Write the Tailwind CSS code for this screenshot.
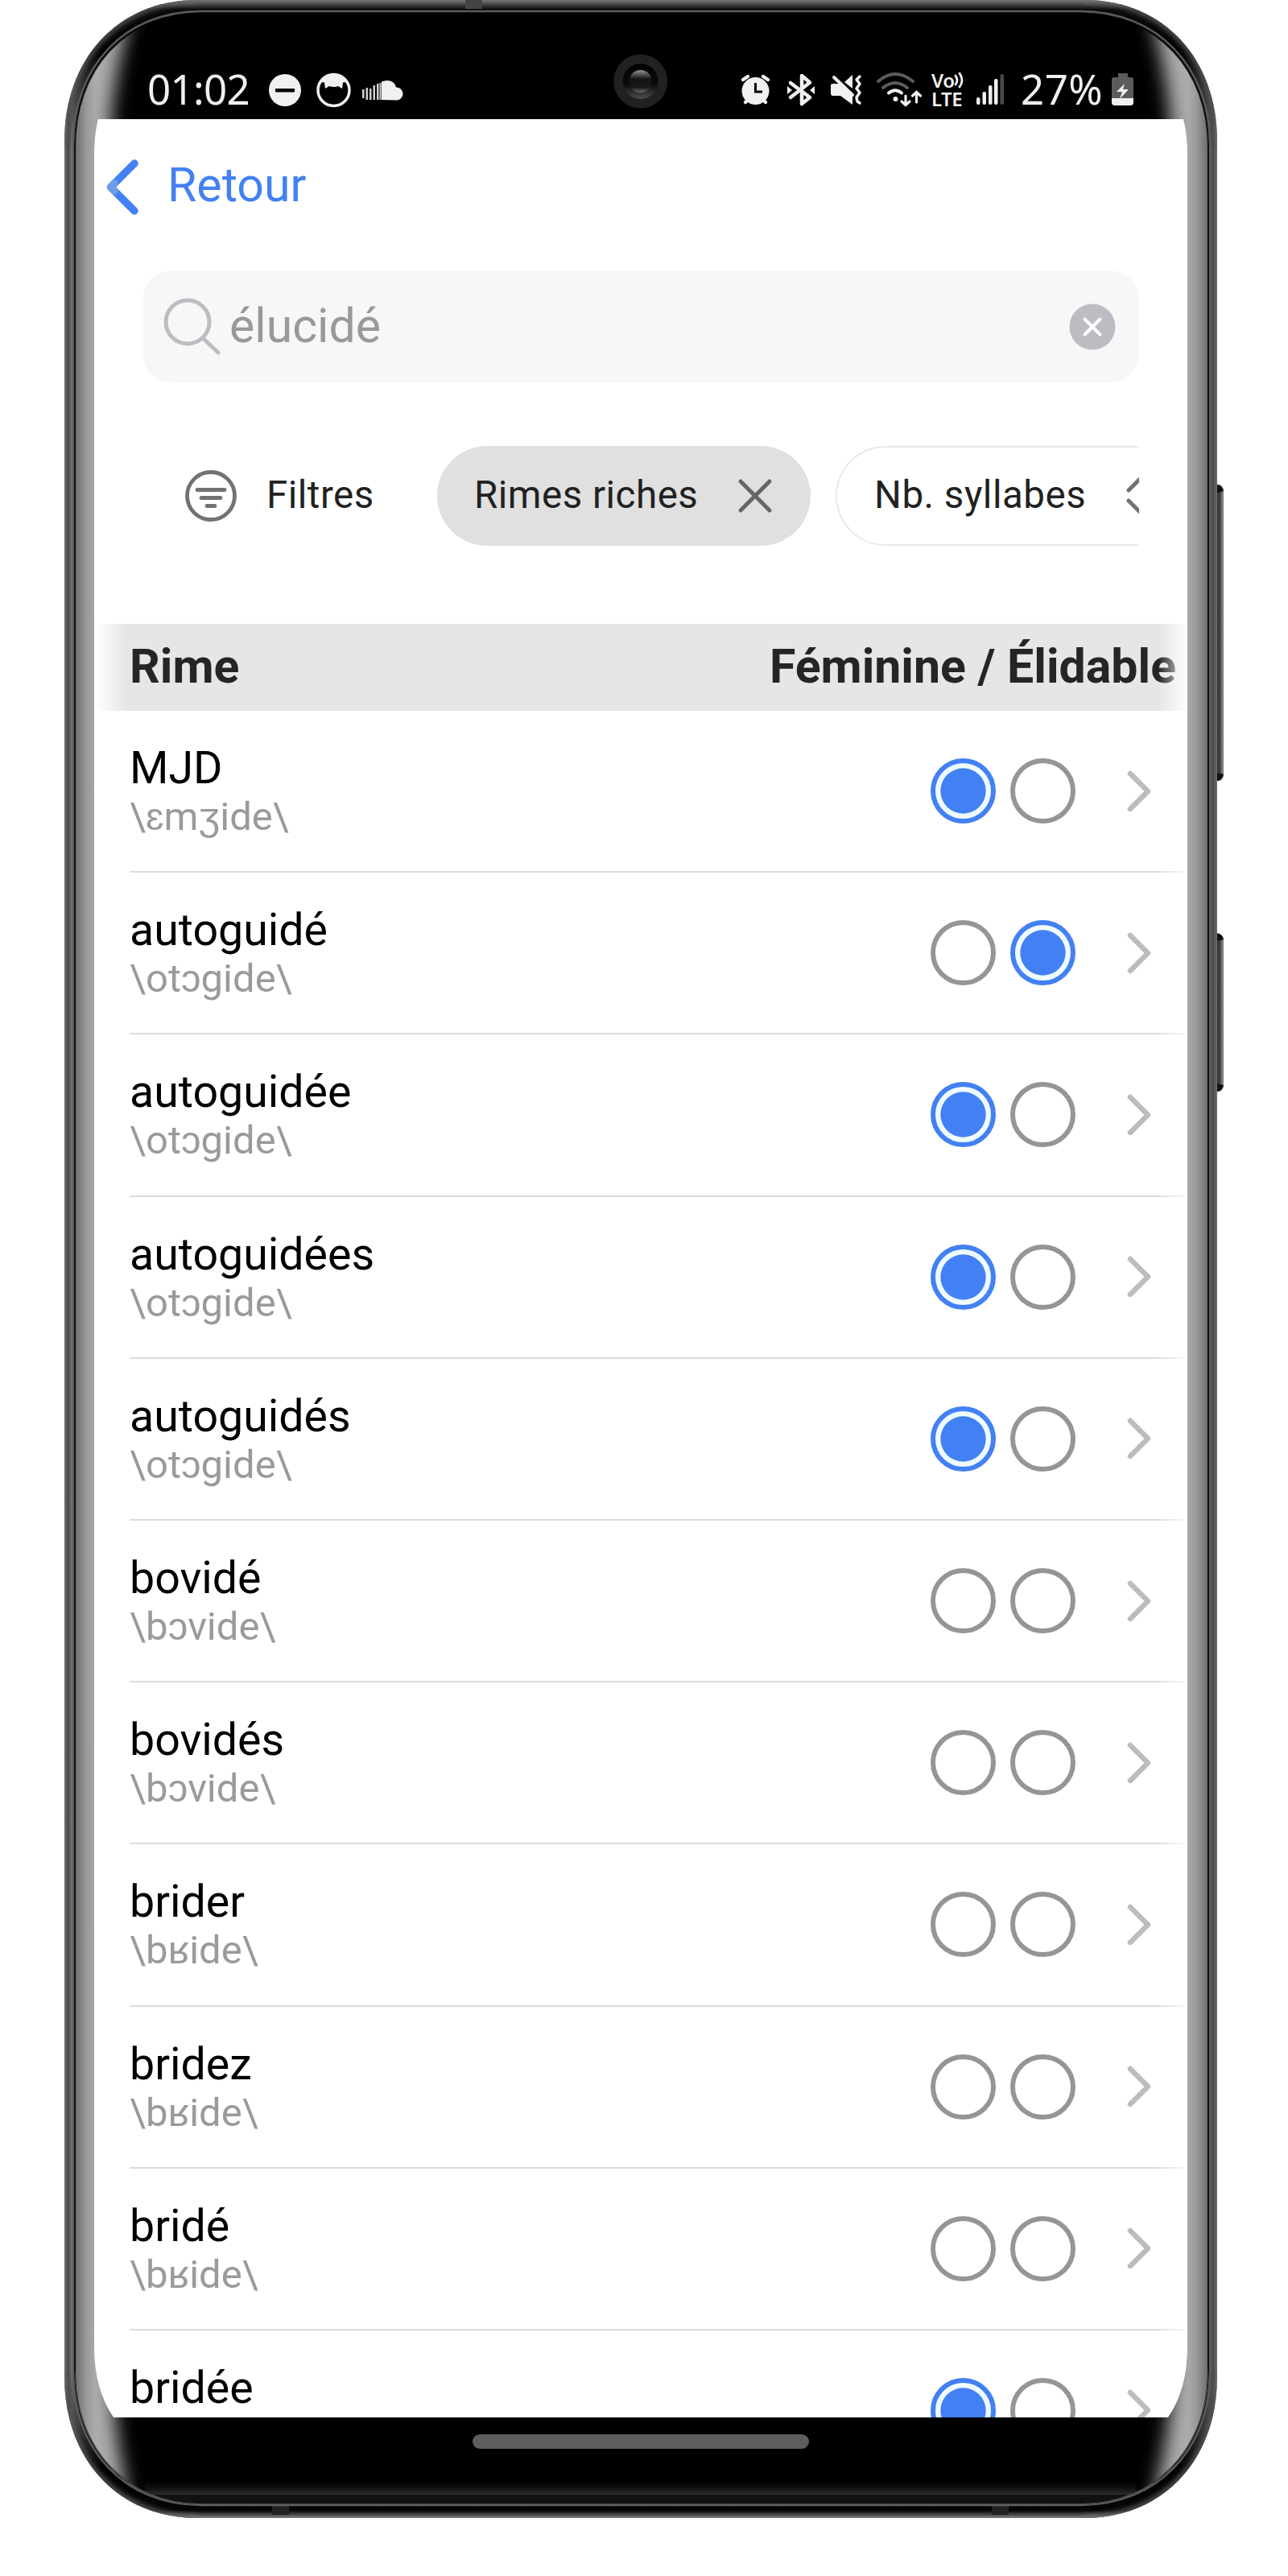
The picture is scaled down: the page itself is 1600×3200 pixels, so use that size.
<!DOCTYPE html>
<html lang="fr">
<head>
<meta charset="utf-8">
<title>Rimes</title>
<script src="https://cdn.jsdelivr.net/npm/@tailwindcss/browser@4"></script>
</head>
<body class="bg-white font-['Roboto',sans-serif]">
<div class="relative w-[1600px] h-[3200px] overflow-hidden bg-white">

<!-- Device body -->
<svg class="absolute inset-0" width="1600" height="3200" viewBox="0 0 1600 3200">
  <defs>
    <linearGradient id="side" x1="80" x2="1512" y1="0" y2="0" gradientUnits="userSpaceOnUse">
      <stop offset="0" stop-color="#6e6e6e"/><stop offset=".0035" stop-color="#4a4a4a"/><stop offset=".0065" stop-color="#777"/>
      <stop offset=".9935" stop-color="#666"/><stop offset=".9965" stop-color="#4a4a4a"/><stop offset="1" stop-color="#707070"/>
    </linearGradient>
    <linearGradient id="ends" x1="0" x2="0" y1="0" y2="3128" gradientUnits="userSpaceOnUse">
      <stop offset="0" stop-color="#777"/><stop offset=".0038" stop-color="#0a0a0a"/><stop offset=".02" stop-color="#000"/><stop offset=".035" stop-color="#000" stop-opacity=".55"/>
      <stop offset=".06" stop-color="#000" stop-opacity="0"/><stop offset=".94" stop-color="#000" stop-opacity="0"/><stop offset=".965" stop-color="#000" stop-opacity=".55"/><stop offset=".98" stop-color="#000"/>
      <stop offset=".997" stop-color="#050505"/><stop offset="1" stop-color="#808080"/>
    </linearGradient>
    <linearGradient id="glass" x1="93" x2="1501" y1="0" y2="0" gradientUnits="userSpaceOnUse">
      <stop offset="0" stop-color="#6a6b6b"/><stop offset=".010" stop-color="#979898"/><stop offset=".018" stop-color="#acacac"/>
      <stop offset=".982" stop-color="#acacac"/><stop offset=".990" stop-color="#979898"/><stop offset="1" stop-color="#6a6b6b"/>
    </linearGradient>
    <linearGradient id="lip" x1="0" x2="0" y1="3079" y2="3099" gradientUnits="userSpaceOnUse">
      <stop offset="0" stop-color="#000" stop-opacity="0"/><stop offset="1" stop-color="#303030"/>
    </linearGradient>
    <linearGradient id="btn" x1="1512" x2="1520" y1="0" y2="0" gradientUnits="userSpaceOnUse">
      <stop offset="0" stop-color="#333"/><stop offset=".6" stop-color="#4c4c4c"/><stop offset=".75" stop-color="#8a8a8a"/><stop offset="1" stop-color="#777"/>
    </linearGradient>
    <linearGradient id="lens" x1="0" x2="0" y1="86" y2="116" gradientUnits="userSpaceOnUse">
      <stop offset="0" stop-color="#9a9da3"/><stop offset=".4" stop-color="#151515"/><stop offset=".75" stop-color="#181818"/><stop offset="1" stop-color="#777"/>
    </linearGradient>
    <linearGradient id="lensring" x1="0" x2="0" y1="79" y2="123" gradientUnits="userSpaceOnUse">
      <stop offset="0" stop-color="#000"/><stop offset=".6" stop-color="#0c0c0c"/><stop offset="1" stop-color="#505050"/>
    </linearGradient>
    <filter id="soft" x="-5%" y="-5%" width="110%" height="110%"><feGaussianBlur stdDeviation="11"/></filter>
    <filter id="softer" x="-5%" y="-5%" width="110%" height="110%"><feGaussianBlur stdDeviation="3.5"/></filter>
    <clipPath id="body"><path d="M80 175C80 75 145 0 245 0H1347C1447 0 1512 75 1512 175V2953C1512 3053 1447 3128 1347 3128H245C145 3128 80 3053 80 2953Z"/></clipPath>
    <clipPath id="inner"><path d="M93 182C93 87 155 16 250 16H1342C1437 16 1501 87 1501 182V2947C1501 3039 1437 3111 1342 3111H250C155 3111 93 3039 93 2947Z"/></clipPath>
  </defs>
  <rect x="1505" y="602" width="15" height="368" rx="7" fill="url(#btn)"/>
  <path d="M1512 602Q1518 603 1520 610L1512 612ZM1512 970Q1518 969 1520 962L1512 960Z" fill="#111"/>
  <rect x="1505" y="1160" width="15" height="196" rx="7" fill="url(#btn)"/>
  <path d="M1512 1159Q1518 1160 1520 1167L1512 1169ZM1512 1356Q1518 1355 1520 1348L1512 1346Z" fill="#111"/>
  <g clip-path="url(#body)">
    <rect x="80" y="0" width="1432" height="3128" fill="url(#side)"/>
    <rect x="80" y="0" width="1432" height="3128" fill="url(#ends)"/>
    <path d="M80 175C80 75 145 0 245 0M1347 0C1447 0 1512 75 1512 175M80 2953C80 3053 145 3128 245 3128M1347 3128C1447 3128 1512 3053 1512 2953" fill="none" stroke="#6a6a6a" stroke-width="6" filter="url(#softer)"/>
    <rect x="338" y="3113" width="21" height="11" fill="#222"/><rect x="1232" y="3113" width="21" height="11" fill="#222"/>
    <rect x="578" y="0" width="21" height="11" fill="#444"/>
  </g>
  <path d="M91 180C91 84 153 14 250 14H1342C1439 14 1503 84 1503 180V2948C1503 3041 1439 3112 1342 3112H250C153 3112 91 3041 91 2948Z" fill="#000" stroke="#5c5c5c" stroke-width="2.5"/>
  <g clip-path="url(#inner)">
    <rect x="92" y="16" width="1410" height="3096" fill="url(#glass)"/>
    <path d="M136 200C136 120 150 60 176 -30H1416C1442 60 1456 120 1456 200V2960C1452 3040 1436 3070 1426 3160H166C156 3070 144 3040 140 2960Z" fill="#000" filter="url(#soft)"/>
    <rect x="180" y="3079" width="1232" height="20" fill="url(#lip)"/>
    <path d="M165 3099H1427V3112H165Z" fill="#111"/>
    <path d="M93 182C93 87 155 16 250 16H1342C1437 16 1501 87 1501 182V2947C1501 3039 1437 3111 1342 3111H250C155 3111 93 3039 93 2947Z" fill="none" stroke="#000" stroke-width="2"/>
    <path d="M92 2945C92 3039 155 3111.500 250 3111.500H1342C1437 3111.500 1502 3039 1502 2945" fill="none" stroke="#666" stroke-width="2.500"/>
  </g>
  <path d="M122 148H1470C1473.500 162 1475 176 1475 195V2915C1475 2950 1467 2980 1451 3003H141C125 2980 117 2950 117 2915V195C117 176 118.500 162 122 148Z" fill="#fff"/>
  <circle cx="795.700" cy="101" r="33.500" fill="#212121"/>
  <circle cx="795.700" cy="101" r="22" fill="url(#lensring)"/>
  <circle cx="795.700" cy="101" r="14" fill="url(#lens)"/>
</svg>

<!-- Screen -->
<div class="relative ml-[117px] w-[1358px] h-[3003px] overflow-hidden flex flex-col">

  <!-- Status bar -->
  <div class="h-[148px] shrink-0 flex items-start justify-between pl-[66px] pr-[66px] text-[#f0f0f0] font-['Noto_Sans']">
    <div class="flex pt-[76px] h-[148px]">
      <span class="w-[150px] -mt-0.5 text-[51px] leading-[72px] tracking-[-0.700px]">01:02</span>
      <svg class="mt-2" width="172" height="56" viewBox="333 84 172 56">
        <circle cx="354" cy="112" r="20" fill="#f0f0f0"/><rect x="342" y="110" width="24" height="4.500" rx="1" fill="#000"/>
        <circle cx="414.500" cy="112" r="19.500" fill="none" stroke="#f0f0f0" stroke-width="3.500"/>
        <path d="M396 106A19.500 19.500 0 0 1 433 106L430 103Q427 101 426 103L425 110L420 107Q414.500 109 409 107L404 110L403 103Q402 101 399 103Z" fill="#f0f0f0"/>
        <path d="M474 124V101.500Q477 100 481 100Q490 100 492 108.500A8 8 0 1 1 493 124.500Z" fill="#f0f0f0"/>
        <g fill="#d0d0d0"><rect x="450" y="111" width="2.500" height="11"/><rect x="454.500" y="109" width="2.500" height="15"/><rect x="459" y="110" width="2.500" height="14"/><rect x="463.500" y="106" width="2.500" height="18"/><rect x="468" y="104" width="2.500" height="20"/><rect x="471.500" y="103" width="2" height="21"/></g>
      </svg>
    </div>
    <div class="flex pt-[76px] h-[148px]">
      <svg class="mt-2" width="240" height="56" viewBox="913 84 240 56" fill="#f0f0f0">
        <circle cx="939.500" cy="113" r="17"/><path d="M924 99L930 95M955 99L949 95M927 127L930 124M952 127L949 124" stroke="#f0f0f0" stroke-width="4.500" stroke-linecap="round"/><path d="M939.500 103V114H948" stroke="#000" stroke-width="3" fill="none"/>
        <path d="M983 103L1007 121L997 129V94L1007 102.500L983 121" fill="none" stroke="#f0f0f0" stroke-width="4.500" stroke-linejoin="round" stroke-linecap="round"/><path d="M979 107L985 112L979 117ZM1013 107L1007 112L1013 117Z"/>
        <path d="M1033 106Q1033 104 1036 104H1043L1060 119V130L1045 119H1036Q1033 119 1033 116ZM1060 93V110L1050 102Z"/><path d="M1037 96L1060 118" stroke="#f0f0f0" stroke-width="4" stroke-linecap="round"/><path d="M1069 95L1065 99L1069 104L1065 110L1069 115L1065 121L1066 126L1069 128" fill="none" stroke="#f0f0f0" stroke-width="3.500" stroke-linejoin="round" stroke-linecap="round"/>
        <g fill="none" stroke-linecap="round" stroke-width="4"><path d="M1092 101Q1113 83 1135 101" stroke="#5c5c5c"/><path d="M1098 109Q1113 97 1128 109" stroke="#5c5c5c"/><path d="M1105 115.500Q1113 109 1121 115.500" stroke="#f0f0f0"/><path d="M1126 119V130M1121 126L1126 130.500L1131 126M1139.500 127V115M1134.500 119L1139.500 114.500L1144.500 119" stroke="#f0f0f0" stroke-width="3.200"/></g><circle cx="1113.500" cy="123" r="3"/>
      </svg>
      <div class="mt-[12px] w-[52px] pl-[5px] flex flex-col font-semibold text-[24px] leading-[23px] tracking-[-0.500px]">
        <span class="flex items-center h-[23px]">Vo<svg class="shrink-0" width="14" height="20" viewBox="0 0 14 20"><path d="M2 4Q6 10 2 15M7 1Q13 10 7 18" fill="none" stroke="#f0f0f0" stroke-width="2.800" stroke-linecap="round"/></svg></span>
        <span class="h-[23px]">LTE</span>
      </div>
      <svg class="mt-2" width="62" height="56" viewBox="1205 84 62 56" fill="#f0f0f0">
        <rect x="1214" y="121" width="4.500" height="9" rx="2"/><rect x="1221.500" y="114" width="4.500" height="16" rx="2"/><rect x="1229" y="106" width="4.500" height="24" rx="2"/><rect x="1236" y="98" width="4.500" height="32" rx="2"/><rect x="1243.500" y="92" width="4.500" height="38" rx="2" fill="#4a4a4a"/>
      </svg>
      <span class="w-[111px] pl-0.5 -mt-0.5 text-[51px] leading-[72px] tracking-[0.500px]">27%</span>
      <svg class="mt-2" width="32" height="56" viewBox="1377 84 32 56">
        <path d="M1389 91H1401V96H1405Q1408 96 1408 99V127Q1408 131 1404 131H1385Q1381 131 1381 127V99Q1381 96 1384 96H1389Z" fill="#5c5c5c"/><path d="M1381 122H1408V127Q1408 131 1404 131H1385Q1381 131 1381 127Z" fill="#f0f0f0"/><path d="M1397 104L1387 114H1394L1391 123L1402 111H1395Z" fill="#f0f0f0"/>
      </svg>
    </div>
  </div>

  <!-- Navigation -->
  <div class="h-[188px] shrink-0 flex pl-[10px] pt-[42px] text-[#4380f4]">
    <svg width="81" height="84" viewBox="127 190 81 84" fill="none" stroke-linecap="round" stroke-linejoin="round" stroke-width="9.500"><path d="M167 203L137.500 232.500L167 262" stroke="#4380f4"/><path d="M142 228L137.500 232.500L142 237" stroke="#709bea"/></svg>
    <span class="text-[59px] leading-[80px]">Retour</span>
  </div>

  <!-- Search -->
  <div class="mx-[60px] h-[139px] shrink-0 rounded-[36px] bg-[#f7f7f7] flex items-center pl-[20px] pr-[26px]">
    <svg width="88" height="80" viewBox="197 366 88 80" fill="none" stroke="#bbbdc2" stroke-width="5" stroke-linecap="round"><circle cx="233" cy="400" r="27"/><path d="M252 420L271 438"/></svg>
    <span class="flex-1 -mt-0.5 text-[59px] leading-[80px] text-[#999]">élucidé</span>
    <svg width="64" height="64" viewBox="1325 374 64 64"><circle cx="1357" cy="406" r="28.500" fill="#bbbdc2"/><path d="M1347.500 396.500L1366.500 415.500M1366.500 396.500L1347.500 415.500" stroke="#fff" stroke-width="4" stroke-linecap="round"/></svg>
  </div>

  <!-- Filters -->
  <div class="mx-[60px] mt-[79px] h-[124px] shrink-0 flex overflow-hidden text-[47.500px] leading-[122px] text-[#212121] whitespace-nowrap">
    <div class="w-[366px] shrink-0 flex pl-[48px]">
      <svg width="106" height="124" viewBox="225 554 106 124" fill="none" stroke="#727272" stroke-width="4.800" stroke-linecap="round"><circle cx="262" cy="616" r="29.500"/><path d="M245 608.500H279M250 618.500H274M257 628.500H267"/></svg>
      <span class="tracking-[0.500px]">Filtres</span>
    </div>
    <div class="w-[464px] shrink-0 rounded-full bg-[#e0e0e0] flex pl-[46px]">
      <span class="w-[320px] tracking-[0.500px]">Rimes riches</span>
      <svg width="60" height="124" viewBox="909 554 60 124" fill="none" stroke="#666" stroke-width="5" stroke-linecap="round"><path d="M920 598L956 634M956 598L920 634"/></svg>
    </div>
    <div class="ml-[31px] w-[464px] shrink-0 rounded-full border-2 border-[#e9e9e9] flex pl-[46px] leading-[118px]">
      <span class="w-[303px] tracking-[0.500px]">Nb. syllabes</span>
      <svg class="-mt-0.5" width="60" height="124" viewBox="1390 554 60 124" fill="none" stroke="#727272" stroke-width="5" stroke-linecap="round"><path d="M1403 609L1420 592L1437 609M1403 622L1420 639L1437 622"/></svg>
    </div>
  </div>

  <!-- Table header -->
  <div class="mt-[97px] h-[108px] shrink-0 bg-linear-to-r from-white via-[#e5e7e6] via-3% to-[#e5e7e6] text-[59px] font-bold text-[#252525]">
    <div class="h-full flex justify-between items-center pl-[44px] pr-[14px] pb-0.5 whitespace-nowrap">
      <span>Rime</span><span>Féminine / Élidable</span>
    </div>
  </div>

  <!-- Results -->
  <div id="rows" class="flex flex-col"></div>
</div>

<!-- Edge fade on the right of the list -->
<div class="absolute left-[1439px] top-[775px] w-[36px] h-[2130px] bg-linear-to-r from-white/0 to-white/90"></div>
<!-- Home indicator -->
<div class="absolute left-[587px] top-[3024px] w-[418px] h-[18px] rounded-full bg-[#5e5e5e]"></div>
</div>

<script>
const rows = [
  ['MJD', '\\ɛmʒide\\', 1, 0], ['autoguidé', '\\otɔgide\\', 0, 1], ['autoguidée', '\\otɔgide\\', 1, 0],
  ['autoguidées', '\\otɔgide\\', 1, 0], ['autoguidés', '\\otɔgide\\', 1, 0], ['bovidé', '\\bɔvide\\', 0, 0],
  ['bovidés', '\\bɔvide\\', 0, 0], ['brider', '\\bʁide\\', 0, 0], ['bridez', '\\bʁide\\', 0, 0],
  ['bridé', '\\bʁide\\', 0, 0], ['bridée', '', 1, 0]
];
const radio = on => on
  ? '<svg width="81" height="81" viewBox="0 0 81 81"><circle cx="40.5" cy="40.5" r="37.500" fill="#effbff" stroke="#4380f4" stroke-width="6"/><circle cx="40.5" cy="40.5" r="28.200" fill="#4380f4"/></svg>'
  : '<svg width="81" height="81" viewBox="0 0 81 81"><circle cx="40.5" cy="40.5" r="37.500" fill="none" stroke="#949596" stroke-width="6"/></svg>';
document.getElementById('rows').innerHTML = rows.map(([word, ipa, fem, eli]) => `
  <div class="ml-[44px] h-[201.2px] shrink-0 flex items-center border-b-2 border-[#dcdcdc]">
    <div class="flex-1 flex flex-col pt-0.5">
      <span class="text-[55.500px] leading-[63px] text-black">${word}</span>
      <span class="h-[58px] text-[49px] leading-[58px] text-[#999b9b]">${ipa}</span>
    </div>
    <div class="flex gap-[18px]">${radio(fem)}${radio(eli)}</div>
    <svg class="ml-[60px] mr-[37px]" width="42" height="60" viewBox="0 0 42 60" fill="none" stroke="#bbbcc0" stroke-width="6.500" stroke-linecap="round" stroke-linejoin="round"><path d="M8 8L30 30L8 52"/></svg>
  </div>`).join('');
</script>
</body>
</html>
